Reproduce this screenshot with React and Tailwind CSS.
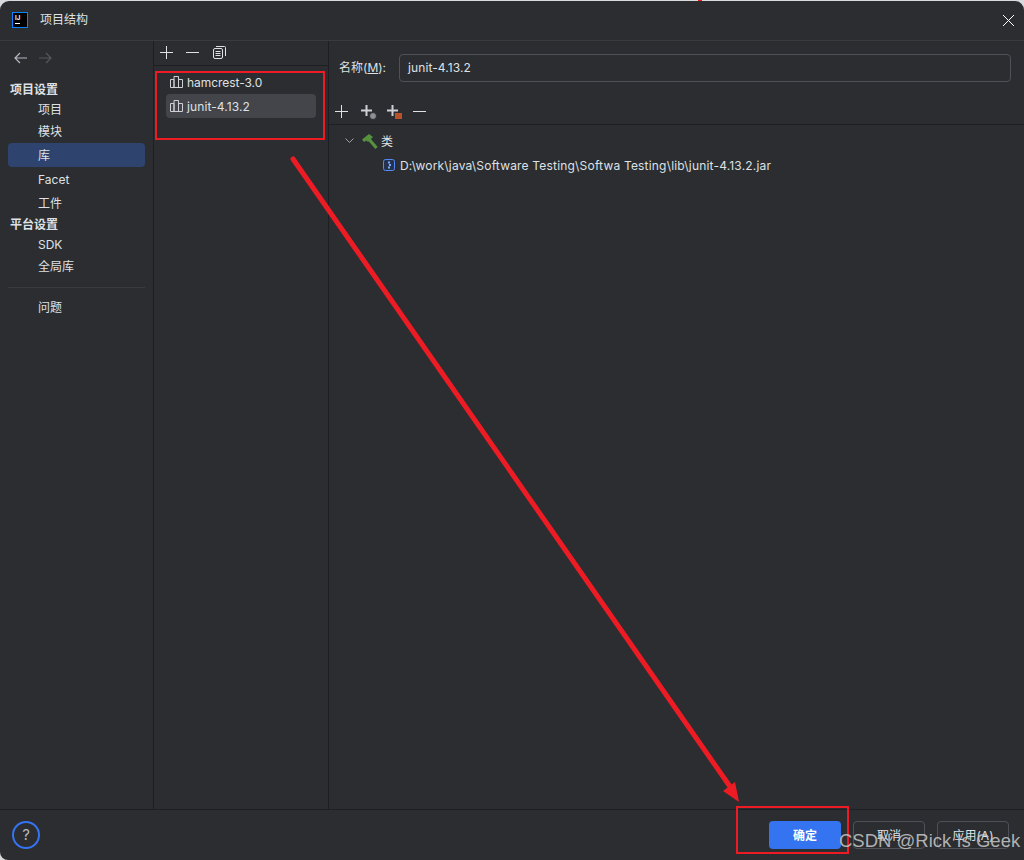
const font = "[font-family:Inter,'Noto_Sans_CJK_SC',sans-serif]"

function LibIcon() {
  return (
    <svg width="13" height="12" viewBox="0 0 13 12" fill="none" stroke="#ced0d6" strokeWidth="1" className="shrink-0">
      <path d="M0.5 11.5V3.5H4V11.5M4 11.5V0.5H8.5V11.5M8.5 11.5V3.5H12.5V11.5H0.5" />
    </svg>
  )
}

function Plus({ size = 13, color = "#dfe1e5", width = 1 }) {
  return (
    <svg width={size} height={size} viewBox={`0 0 ${size} ${size}`} stroke={color} strokeWidth={width} className="shrink-0">
      <path d={`M${size / 2} 0V${size}M0 ${size / 2}H${size}`} />
    </svg>
  )
}

function Minus() {
  return (
    <svg width="13" height="13" viewBox="0 0 13 13" stroke="#dfe1e5" className="shrink-0">
      <path d="M0 6.5H13" />
    </svg>
  )
}

function NavItem({ label, h = "h-[22px]", active }) {
  return (
    <div className={`${h} flex items-center pl-[30px] pt-px rounded-[4px] ${active ? "bg-[#2e436e]" : ""}`}>
      {label}
    </div>
  )
}

function Heading({ label }) {
  return <div className="h-[18px] pl-[2px] pt-px flex items-center font-bold leading-none">{label}</div>
}

export default function App() {
  return (
    <div className={`relative w-[1024px] h-[860px] overflow-hidden bg-[#d9dadb] text-[#dfe1e5] text-[12px] ${font}`}>
      <div className="h-[859px] mt-px bg-[#2b2d30] rounded-t-[9px] rounded-bl-[8px] flex flex-col">
        {/* title bar */}
        <div className="h-[41px] -mt-px shrink-0 flex items-center pl-3 pr-[10px] border-b border-[#393b40]">
          <div className="w-4 h-4 bg-black border border-[#0a84ff] shrink-0 flex flex-col pl-[2px] pt-px">
            <span className="text-white text-[6px] leading-[7px] font-bold">IJ</span>
            <span className="w-[5px] h-px bg-white mt-[2px]" />
          </div>
          <span className="ml-3">项目结构</span>
          <svg width="11" height="11" viewBox="0 0 11 11" stroke="#ffffff" className="ml-auto shrink-0">
            <path d="M0 0L11 11M11 0L0 11" />
          </svg>
        </div>

        <div className="flex-1 flex min-h-0">
          {/* sidebar */}
          <div className="w-[154px] shrink-0 border-r border-[#1e1f22] px-2">
            <div className="h-[39px] pb-[5px] flex items-center gap-[12px] pl-[6px]">
              <svg width="13" height="12" viewBox="0 0 13 12" fill="none" stroke="#b4b8bf" strokeWidth="1.2">
                <path d="M13 6H1M6 1L1 6L6 11" />
              </svg>
              <svg width="13" height="12" viewBox="0 0 13 12" fill="none" stroke="#55585e" strokeWidth="1.2">
                <path d="M0 6H12M7 1L12 6L7 11" />
              </svg>
            </div>
            <Heading label="项目设置" />
            <NavItem label="项目" />
            <NavItem label="模块" h="h-[23px]" />
            <NavItem active label="库" h="h-6" />
            <NavItem label="Facet" h="h-6" />
            <NavItem label="工件" h="h-6" />
            <Heading label="平台设置" />
            <NavItem label="SDK" />
            <NavItem label="全局库" />
            <div className="h-px bg-[#393b40] mt-[10px] mb-[8px]" />
            <NavItem label="问题" />
          </div>

          {/* library list */}
          <div className="w-[175px] shrink-0 border-r border-[#1e1f22]">
            <div className="h-[25px] pb-[2px] border-b border-[#1e1f22] flex items-center pl-[6px] gap-[13px]">
              <Plus />
              <Minus />
              <svg width="13" height="13" viewBox="0 0 13 13" fill="none" stroke="#dfe1e5" className="shrink-0 ml-px">
                <rect x="0.5" y="2.5" width="9" height="10" rx="1.5" />
                <path d="M2.5 5.5H7.5M2.5 7.5H7.5M2.5 9.5H7.5M3 .5H11.5A1 1 0 0 1 12.5 1.5V10" />
              </svg>
            </div>
            <div className="pt-[4px] px-3">
              <div className="h-6 flex items-center gap-1 pl-1">
                <LibIcon />
                <span className="pt-[2px] tracking-[-0.05px]">hamcrest-3.0</span>
              </div>
              <div className="h-6 flex items-center gap-1 pl-1 bg-[#43454a] rounded-[4px]">
                <LibIcon />
                <span className="pt-[2px] tracking-[0.1px]">junit-4.13.2</span>
              </div>
            </div>
          </div>

          {/* details */}
          <div className="flex-1 min-w-0">
            <div className="h-[59px] flex items-start pl-[10px] pr-[13px] pt-[13px]">
              <span className="w-[60px] h-7 flex items-center shrink-0 whitespace-pre">
                名称(<span className="underline">M</span>):
              </span>
              <div className="flex-1 h-7 border border-[#4e5157] rounded-[4px] flex items-center pl-2 tracking-[0.1px]">
                junit-4.13.2
              </div>
            </div>
            <div className="h-[25px] pb-[2px] border-b border-[#1e1f22] flex items-center pl-[6px] gap-[13px]">
              <Plus />
              <span className="relative w-[13px] h-[13px]">
                <Plus size={11} color="#ced0d6" width={2} />
                <span className="absolute left-[8px] top-[7px] w-[8px] h-[8px] rounded-full bg-[#8c8f94] border border-[#2b2d30]" />
              </span>
              <span className="relative w-[13px] h-[13px]">
                <Plus size={11} color="#ced0d6" width={2} />
                <span className="absolute left-[8px] top-[8px] w-[7px] h-[6px] bg-[#b5522a]" />
              </span>
              <Minus />
            </div>
            <div className="pt-[4px] pl-[16px]">
              <div className="h-6 flex items-center">
                <svg width="9" height="6" viewBox="0 0 9 6" fill="none" stroke="#9da0a8" className="shrink-0">
                  <path d="M0.5 0.5L4.5 4.5L8.5 0.5" />
                </svg>
                <svg width="16" height="15" viewBox="0 0 16 15" className="ml-2 shrink-0">
                  <path d="M6 4L14.5 14" stroke="#55913f" strokeWidth="3.2" />
                  <path d="M0 5.5L7 0L11 3L6 8L4.5 6.5L2 8Z" fill="#55913f" />
                </svg>
                <span className="ml-[3px] pt-px">类</span>
              </div>
              <div className="h-6 flex items-center pl-[38px]">
                <svg width="12" height="12" viewBox="0 0 12 12" className="shrink-0">
                  <rect x="0.5" y="0.5" width="11" height="11" rx="2" fill="#25324d" stroke="#548af7" />
                  <path d="M5 2.5H7V4.5H5ZM6 5H8V7H6ZM5 7.5H7V9.5H5Z" fill="#7ea6f9" />
                </svg>
                <span className="ml-[5px] pt-px tracking-[0.19px]">D:\work\java\Software Testing\Softwa Testing\lib\junit-4.13.2.jar</span>
              </div>
            </div>
          </div>
        </div>

        {/* footer */}
        <div className="h-[51px] shrink-0 border-t border-[#1e1f22] flex items-center pl-3 pr-[15px]">
          <div className="w-7 h-7 rounded-full border-2 border-[#3574f0] flex items-center justify-center text-[15px] text-[#b4b8bf]">?</div>
          <button className="ml-auto w-[72px] h-7 pt-px rounded-[4px] bg-[#3574f0] text-white font-semibold">确定</button>
          <button className="ml-3 w-[72px] h-7 pt-px rounded-[4px] border border-[#4e5157]">取消</button>
          <button className="ml-3 w-[72px] h-7 pt-px rounded-[4px] border border-[#4e5157]">应用(A)</button>
        </div>
      </div>

      {/* annotations drawn over the screenshot */}
      <div className="absolute left-[155px] top-[71px] w-[170px] h-[69px] border-2 border-[#ed1c24]" />
      <div className="absolute left-[736px] top-[806px] w-[113px] h-[48px] border-2 border-[#ed1c24]" />
      <div className="absolute left-[698px] top-0 w-1 h-px bg-[#ed1c24]" />
      <svg width="1024" height="860" className="absolute left-0 top-0 pointer-events-none">
        <path d="M293 159L731 788" stroke="#ed1c24" strokeWidth="5" strokeLinecap="round" />
        <path d="M739 802L723 791L735 782Z" fill="#ed1c24" />
      </svg>
      <span className="absolute left-[839px] top-[829px] whitespace-nowrap text-[18.5px] leading-6 text-[#c9cacc]/85 [font-family:'Liberation_Sans',sans-serif]">CSDN @Rick Is Geek</span>
    </div>
  )
}
